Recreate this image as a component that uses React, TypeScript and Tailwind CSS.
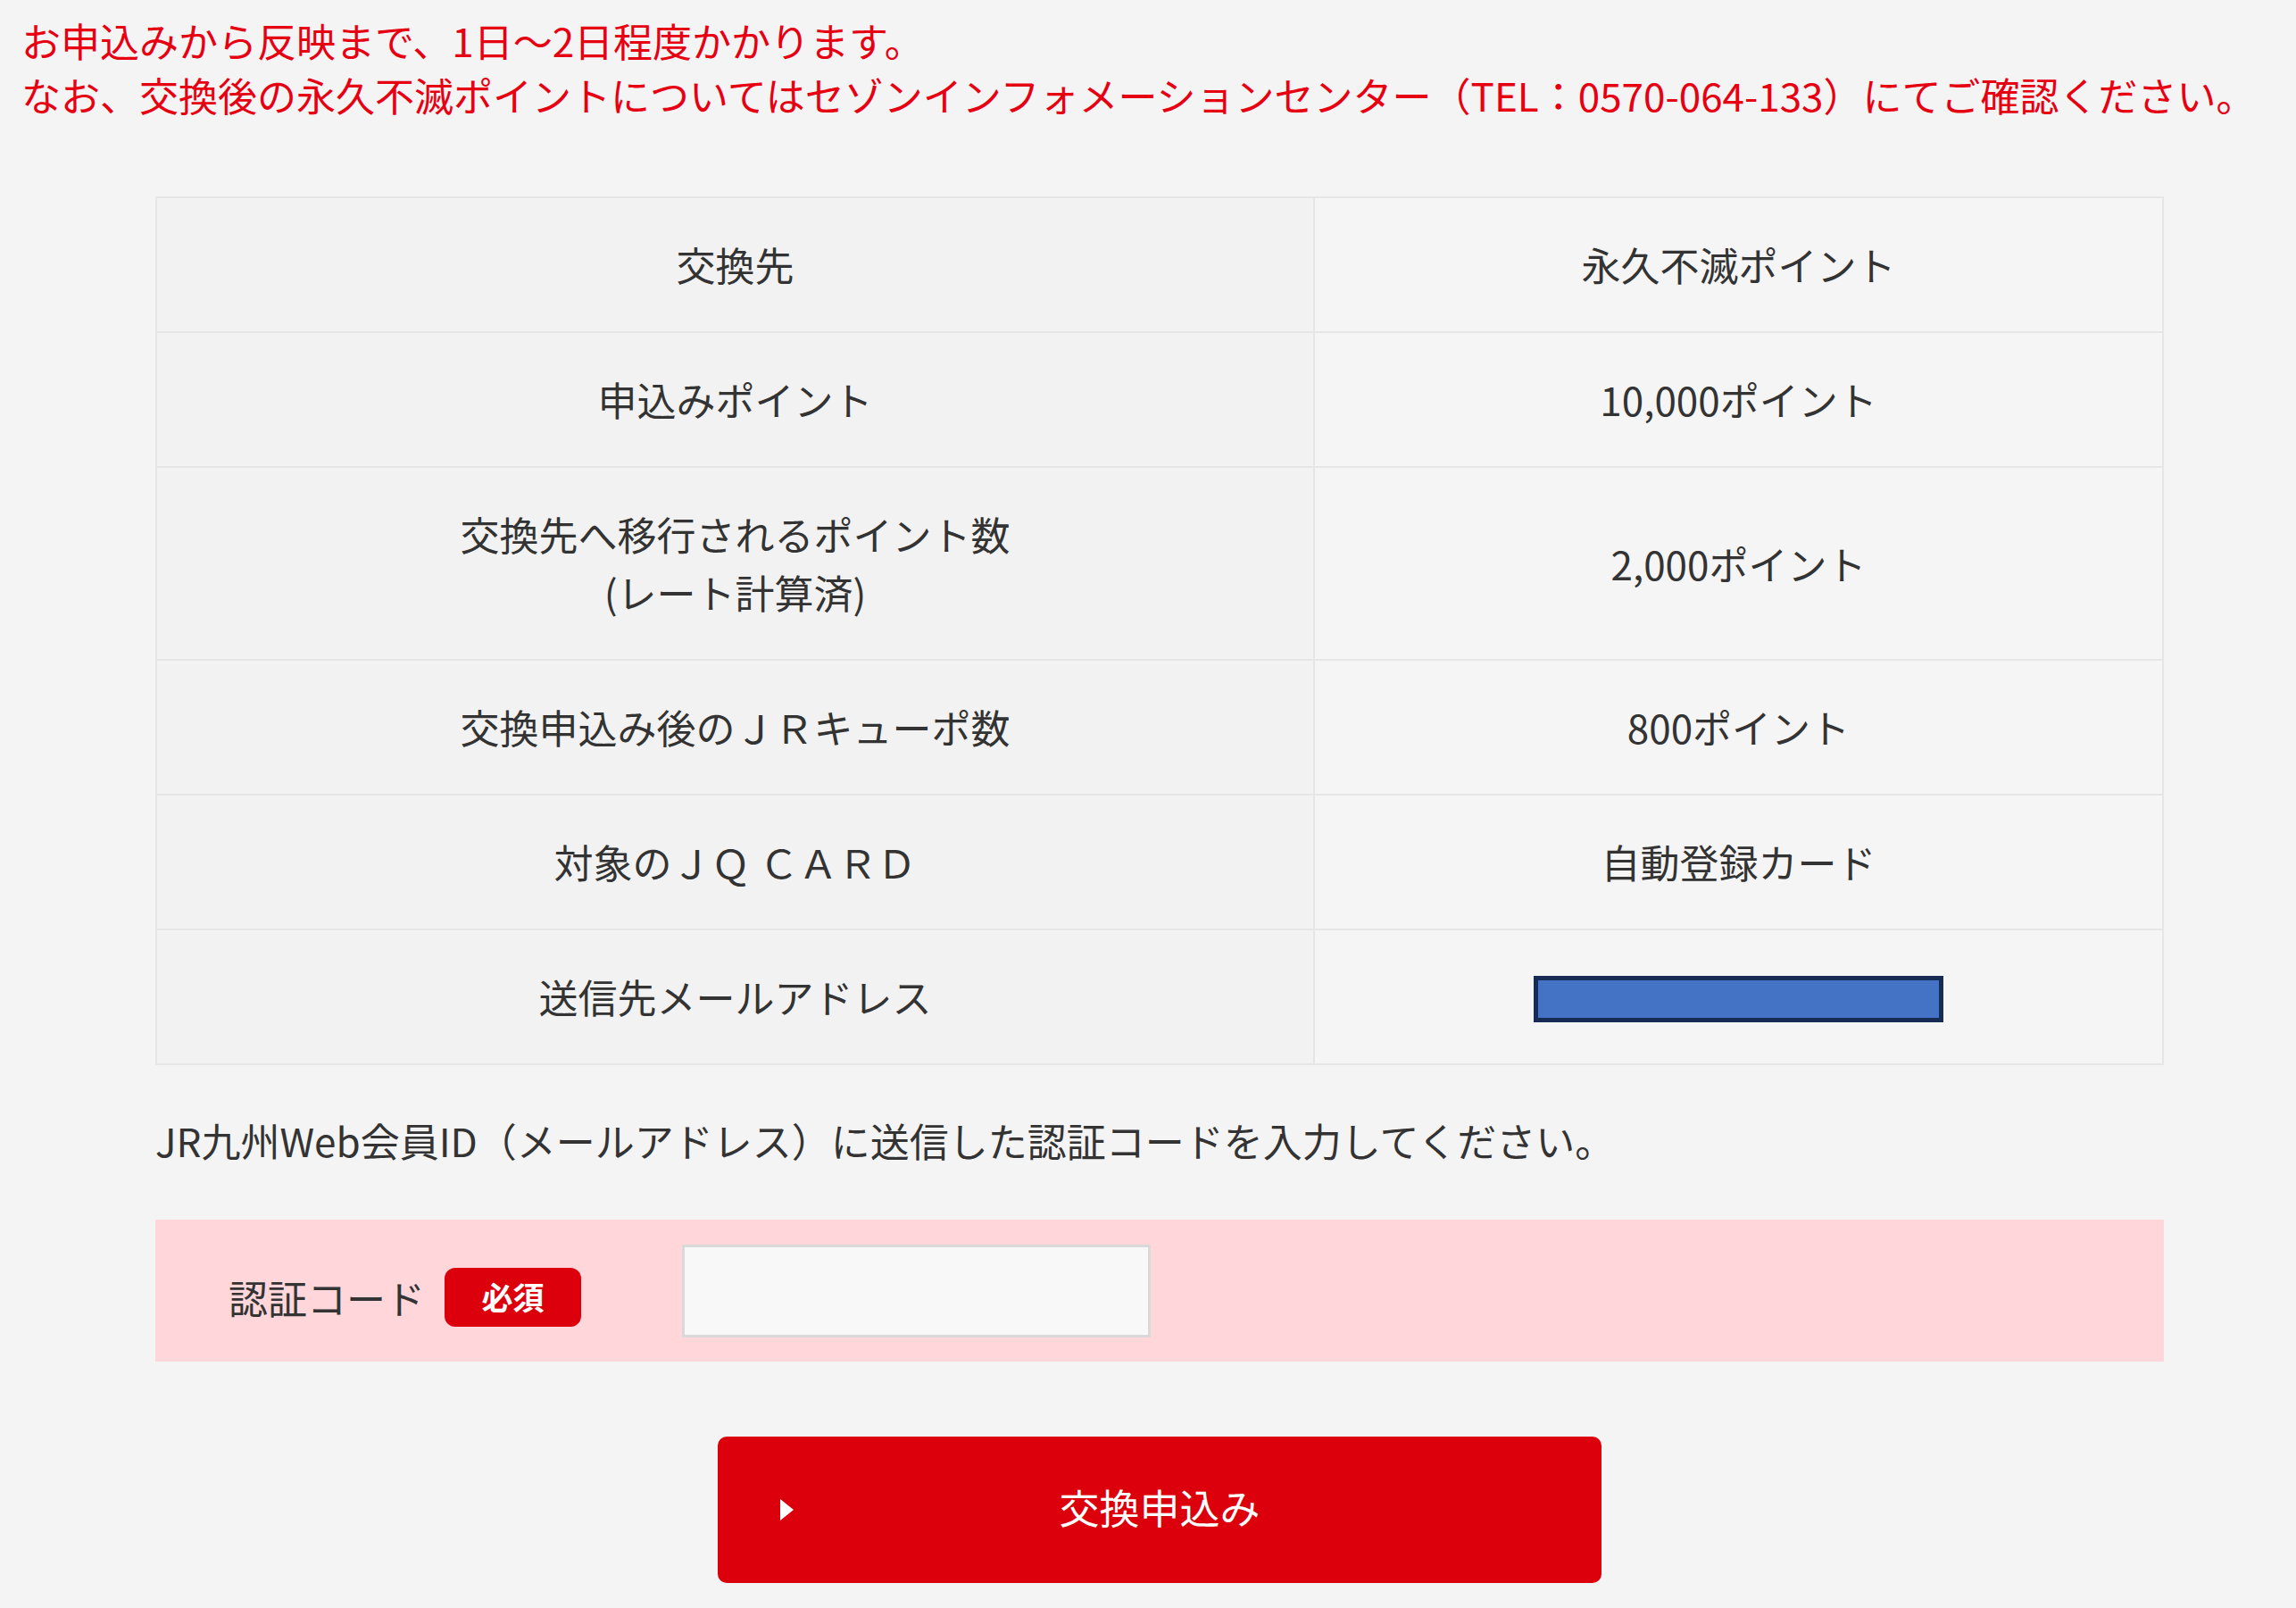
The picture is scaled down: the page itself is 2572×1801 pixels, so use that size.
import React from 'react';

const rows: { label: React.ReactNode; value: React.ReactNode }[] = [
  { label: '交換先', value: '永久不滅ポイント' },
  { label: '申込みポイント', value: '10,000ポイント' },
  {
    label: (
      <>
        交換先へ移行されるポイント数
        <br />
        (レート計算済)
      </>
    ),
    value: '2,000ポイント',
  },
  { label: '交換申込み後のＪＲキューポ数', value: '800ポイント' },
  { label: '対象のＪＱ ＣＡＲＤ', value: '自動登録カード' },
  {
    label: '送信先メールアドレス',
    // address is masked in the screenshot
    value: <span className="inline-block align-middle -translate-y-[4px] w-[459px] h-[52px] bg-[#4472c4] border-[5px] border-[#172c54]" />,
  },
];

export default function App() {
  return (
    <div
      className="min-h-screen bg-[#f4f4f4] text-[#333] text-[44px] pb-[28px]"
      style={{ fontFamily: '"Noto Sans CJK JP", "Noto Sans", sans-serif' }}
    >
      {/* notice */}
      <div className="pl-[24px] pt-[15px] text-[#e60012] leading-[61px]">
        <p>お申込みから反映まで、1日〜2日程度かかります。</p>
        <p>なお、交換後の永久不滅ポイントについてはセゾンインフォメーションセンター（TEL：0570-064-133）にてご確認ください。</p>
      </div>

      <div className="ml-[174px] w-[2250px] mt-[83px]">
        <table className="w-full border-collapse border-2 border-[#e6e6e6]">
          <tbody>
            {rows.map((r, i) => (
              <tr key={i}>
                <td className="w-[1297px] border-2 border-[#e6e6e6] bg-[#f2f2f2] text-center leading-[65px] py-[42px]">
                  {r.label}
                </td>
                <td className="border-2 border-[#e6e6e6] bg-[#f5f5f5] text-center leading-[65px] py-[42px]">
                  {r.value}
                </td>
              </tr>
            ))}
          </tbody>
        </table>

        <p className="mt-[54px] leading-[60px]">JR九州Web会員ID（メールアドレス）に送信した認証コードを入力してください。</p>

        {/* code input */}
        <div className="mt-[59px] h-[159px] bg-[#ffd6da] flex items-center pl-[82px]">
          <div className="flex items-center mt-[14px]">
            <span className="leading-[60px]">認証コード</span>
            <span className="ml-[22px] w-[153px] h-[66px] rounded-[12px] bg-[#dc000c] text-white font-bold text-[35px] flex items-center justify-center">
              必須
            </span>
          </div>
          <input
            type="text"
            className="ml-[113px] w-[525px] h-[104px] bg-[#f7f8f7] border-[3px] border-[#d9d9d9] outline-none"
          />
        </div>

        <button className="mt-[84px] mx-auto w-[990px] h-[164px] rounded-[10px] bg-[#dc000c] text-white text-[45px] relative flex items-center justify-center">
          <span className="absolute left-[70px] top-1/2 -translate-y-1/2 w-0 h-0 border-y-[12px] border-y-transparent border-l-[15px] border-l-white" />
          <span className="-translate-y-[3px]">交換申込み</span>
        </button>
      </div>
    </div>
  );
}
